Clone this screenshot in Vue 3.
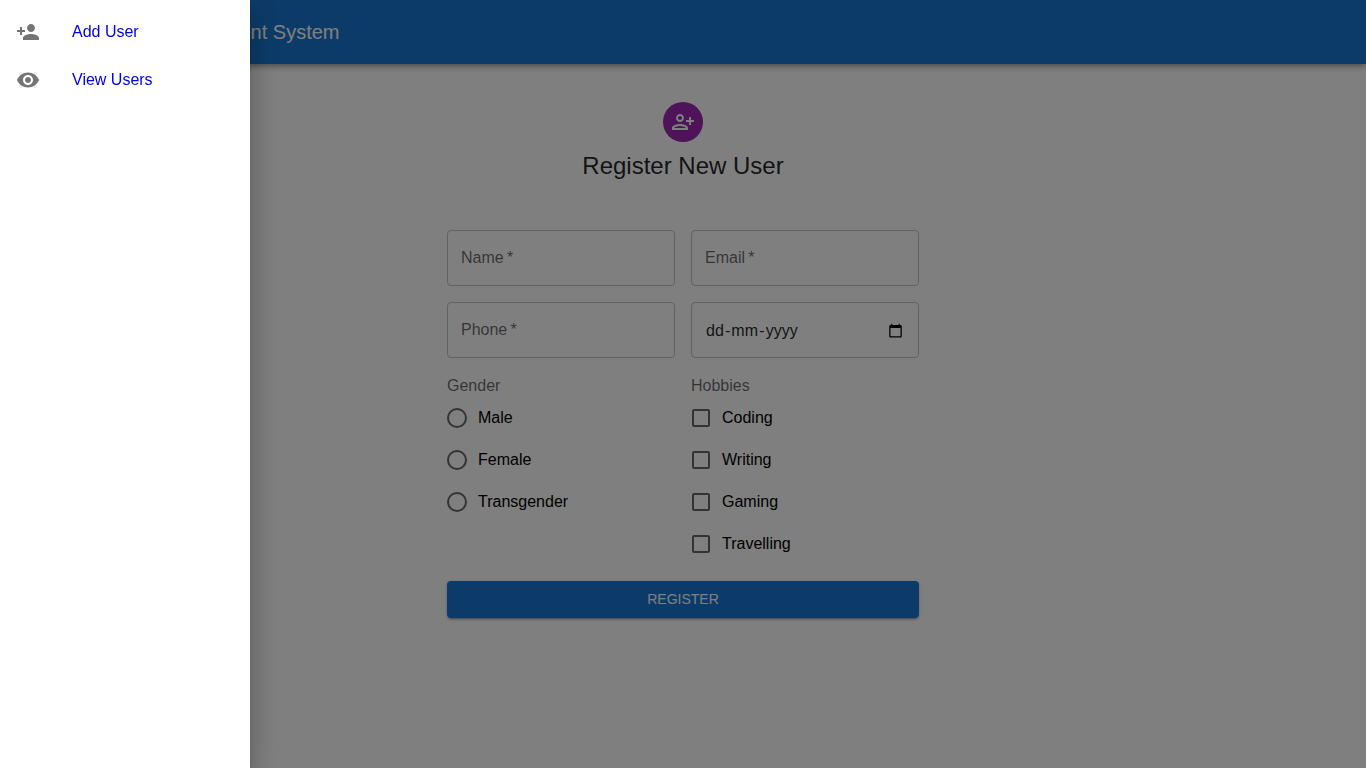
<script setup>
import { reactive, ref } from 'vue'

const navItems = [
  {
    label: 'Add User',
    href: '#add',
    icon: 'M15 12c2.21 0 4-1.79 4-4s-1.79-4-4-4-4 1.79-4 4 1.79 4 4 4zm-9-2V7H4v3H1v2h3v3h2v-3h3v-2H6zm9 4c-2.67 0-8 1.34-8 4v2h16v-2c0-2.66-5.33-4-8-4z'
  },
  {
    label: 'View Users',
    href: '#view',
    icon: 'M12 4.5C7 4.5 2.73 7.61 1 12c1.73 4.39 6 7.5 11 7.5s9.27-3.11 11-7.5c-1.73-4.39-6-7.5-11-7.5zM12 17c-2.76 0-5-2.24-5-5s2.24-5 5-5 5 2.24 5 5-2.24 5-5 5zm0-8c-1.66 0-3 1.34-3 3s1.34 3 3 3 3-1.34 3-3-1.34-3-3-3z'
  }
]

const textFields = [
  { id: 'name', label: 'Name', type: 'text' },
  { id: 'email', label: 'Email', type: 'email' },
  { id: 'phone', label: 'Phone', type: 'tel' }
]
const dateParts = ['dd', 'mm', 'yyyy']
const genders = ['Male', 'Female', 'Transgender']
const hobbies = ['Coding', 'Writing', 'Gaming', 'Travelling']

const drawerOpen = ref(true)
const form = reactive({
  name: '',
  email: '',
  phone: '',
  birth: { dd: '', mm: '', yyyy: '' },
  gender: '',
  hobbies: []
})
</script>

<template>
  <div class="page">
    <header class="app-bar">
      <button class="menu-button" type="button" aria-label="Open menu" @click="drawerOpen = true">
        <svg class="icon" viewBox="0 0 24 24" aria-hidden="true">
          <path d="M3 18h18v-2H3v2zm0-5h18v-2H3v2zm0-7v2h18V6H3z" />
        </svg>
      </button>
      <span class="app-title">Student Management System</span>
    </header>

    <main class="content">
      <div class="avatar">
        <svg class="icon" viewBox="0 0 24 24" aria-hidden="true">
          <path d="M13 8c0-2.21-1.79-4-4-4S5 5.79 5 8s1.79 4 4 4 4-1.79 4-4zm-2 0c0 1.1-.9 2-2 2s-2-.9-2-2 .9-2 2-2 2 .9 2 2zM1 18v2h16v-2c0-2.66-5.33-4-8-4s-8 1.34-8 4zm2 0c.2-.71 3.3-2 6-2 2.69 0 5.77 1.28 6 2H3zM20 15v-3h3v-2h-3V7h-2v3h-3v2h3v3h2z" />
        </svg>
      </div>
      <h1 class="heading">Register New User</h1>

      <form class="form" @submit.prevent>
        <div class="grid">
          <div v-for="field in textFields" :key="field.id" class="field">
            <input
              :id="field.id"
              v-model="form[field.id]"
              class="field-input"
              :class="{ filled: form[field.id] }"
              :type="field.type"
              required
            />
            <label class="field-label" :for="field.id">{{ field.label }}&thinsp;*</label>
          </div>

          <div class="field date-field" role="group" aria-label="Date of birth">
            <div class="date-parts">
              <template v-for="(part, index) in dateParts" :key="part">
                <span v-if="index">-</span>
                <input
                  v-model="form.birth[part]"
                  class="date-part"
                  :class="part"
                  type="text"
                  inputmode="numeric"
                  :maxlength="part.length"
                  :placeholder="part"
                  :aria-label="part"
                />
              </template>
            </div>
            <button class="calendar-button" type="button" aria-label="Show date picker">
              <svg class="calendar-icon" viewBox="0 0 24 24" aria-hidden="true">
                <path d="M20 3h-1V1h-2v2H7V1H5v2H4c-1.1 0-2 .9-2 2v16c0 1.1.9 2 2 2h16c1.1 0 2-.9 2-2V5c0-1.1-.9-2-2-2zm0 18H4V8h16v13z" />
              </svg>
            </button>
          </div>

          <fieldset class="options">
            <legend class="legend">Gender</legend>
            <label v-for="gender in genders" :key="gender" class="option">
              <input v-model="form.gender" class="radio" type="radio" name="gender" :value="gender" />
              {{ gender }}
            </label>
          </fieldset>

          <fieldset class="options">
            <legend class="legend">Hobbies</legend>
            <label v-for="hobby in hobbies" :key="hobby" class="option">
              <input v-model="form.hobbies" class="checkbox" type="checkbox" :value="hobby" />
              {{ hobby }}
            </label>
          </fieldset>
        </div>

        <button class="submit" type="submit">Register</button>
      </form>
    </main>

    <template v-if="drawerOpen">
      <div class="backdrop" @click="drawerOpen = false"></div>
      <nav class="drawer">
        <a v-for="item in navItems" :key="item.label" class="nav-item" :href="item.href">
          <svg class="icon nav-icon" viewBox="0 0 24 24" aria-hidden="true">
            <path :d="item.icon" />
          </svg>
          <span>{{ item.label }}</span>
        </a>
      </nav>
    </template>
  </div>
</template>

<style>
body {
  margin: 0;
  background: #fff;
}
</style>

<style scoped>
.page,
.page * {
  box-sizing: border-box;
}

.page {
  min-height: 100vh;
  font-family: "Liberation Sans", Arial, sans-serif;
  font-size: 16px;
  line-height: 24px;
  color: rgba(0, 0, 0, 0.87);
}

button,
input {
  font: inherit;
  color: inherit;
}

.icon {
  display: block;
  width: 24px;
  height: 24px;
  fill: currentColor;
}

.app-bar {
  position: relative;
  display: flex;
  align-items: center;
  gap: 16px;
  height: 64px;
  padding: 0 12px;
  background: #1976d2;
  color: #fff;
  box-shadow: 0 2px 4px -1px rgba(0, 0, 0, 0.2), 0 4px 5px 0 rgba(0, 0, 0, 0.14), 0 1px 10px 0 rgba(0, 0, 0, 0.12);
}

.menu-button {
  padding: 12px;
  border: 0;
  background: none;
}

.app-title {
  font-size: 20px;
  line-height: 32px;
  white-space: nowrap;
}

.content {
  display: flex;
  flex-direction: column;
  align-items: center;
  max-width: 520px;
  margin: 0 auto;
  padding: 38px 24px;
}

.avatar {
  display: flex;
  align-items: center;
  justify-content: center;
  width: 40px;
  height: 40px;
  margin-bottom: 8px;
  border-radius: 50%;
  background: #9c27b0;
  color: #fff;
}

.heading {
  margin: 0;
  font-size: 24px;
  font-weight: 400;
  line-height: 32px;
}

.form {
  width: 100%;
  margin-top: 48px;
}

.grid {
  display: grid;
  grid-template-columns: 1fr 1fr;
  gap: 16px;
}

.field {
  position: relative;
  height: 56px;
}

.field-input {
  width: 100%;
  height: 100%;
  padding: 0 13px;
  border: 1px solid rgba(0, 0, 0, 0.23);
  border-radius: 4px;
  background: none;
}

.field-label {
  position: absolute;
  top: 16px;
  left: 14px;
  line-height: 23px;
  color: rgba(0, 0, 0, 0.6);
  pointer-events: none;
}

.field-input:focus + .field-label,
.filled + .field-label {
  top: -8px;
  padding: 0 4px;
  background: #fff;
  font-size: 12px;
  line-height: 16px;
}

.date-field {
  display: flex;
  align-items: center;
  justify-content: space-between;
  padding: 0 15px 0 13px;
  border: 1px solid rgba(0, 0, 0, 0.23);
  border-radius: 4px;
}

.date-parts {
  display: flex;
  padding-top: 2px;
}

.date-part {
  height: 24px;
  padding: 0 1px;
  border: 0;
  background: none;
  outline-offset: 0;
}

.date-part::placeholder {
  color: inherit;
  opacity: 1;
}

.dd {
  width: 20px;
}

.mm {
  width: 29px;
}

.yyyy {
  width: 36px;
}

.calendar-button {
  padding: 0;
  border: 0;
  background: none;
  color: #000;
}

.calendar-icon {
  display: block;
  width: 15px;
  height: 15px;
  fill: currentColor;
}

.options {
  min-width: 0;
  margin: 0;
  padding: 0;
  border: 0;
}

.legend {
  padding: 0;
  line-height: 23px;
  color: rgba(0, 0, 0, 0.6);
}

.option {
  display: flex;
  align-items: center;
  gap: 11px;
  height: 42px;
  color: #000;
}

.radio,
.checkbox {
  flex: none;
  appearance: none;
  border: 2px solid rgba(0, 0, 0, 0.6);
}

.radio {
  width: 20px;
  height: 20px;
  margin: 0;
  border-radius: 50%;
}

.checkbox {
  width: 18px;
  height: 18px;
  margin: 1px;
  border-radius: 2px;
}

.radio:checked {
  border-color: #1976d2;
  background: radial-gradient(#1976d2 5px, transparent 6px);
}

.checkbox:checked {
  border-color: #1976d2;
  background: #1976d2;
}

.submit {
  display: block;
  width: 100%;
  margin-top: 16px;
  padding: 6px 16px 7px;
  border: 0;
  border-radius: 4px;
  background: #1976d2;
  color: #fff;
  font-size: 14px;
  font-weight: 500;
  line-height: 24px;
  text-transform: uppercase;
  box-shadow: 0 3px 1px -2px rgba(0, 0, 0, 0.2), 0 2px 2px 0 rgba(0, 0, 0, 0.14), 0 1px 5px 0 rgba(0, 0, 0, 0.12);
}

.backdrop {
  position: fixed;
  inset: 0;
  background: rgba(0, 0, 0, 0.5);
}

.drawer {
  position: fixed;
  top: 0;
  bottom: 0;
  left: 0;
  width: 250px;
  padding: 8px 0;
  background: #fff;
  box-shadow: 0 8px 10px -5px rgba(0, 0, 0, 0.2), 0 16px 24px 2px rgba(0, 0, 0, 0.14), 0 6px 30px 5px rgba(0, 0, 0, 0.12);
}

.nav-item {
  display: flex;
  align-items: center;
  gap: 32px;
  height: 48px;
  padding: 0 16px;
  color: #0000ee;
  text-decoration: none;
}

.nav-icon {
  color: rgba(0, 0, 0, 0.54);
}
</style>
